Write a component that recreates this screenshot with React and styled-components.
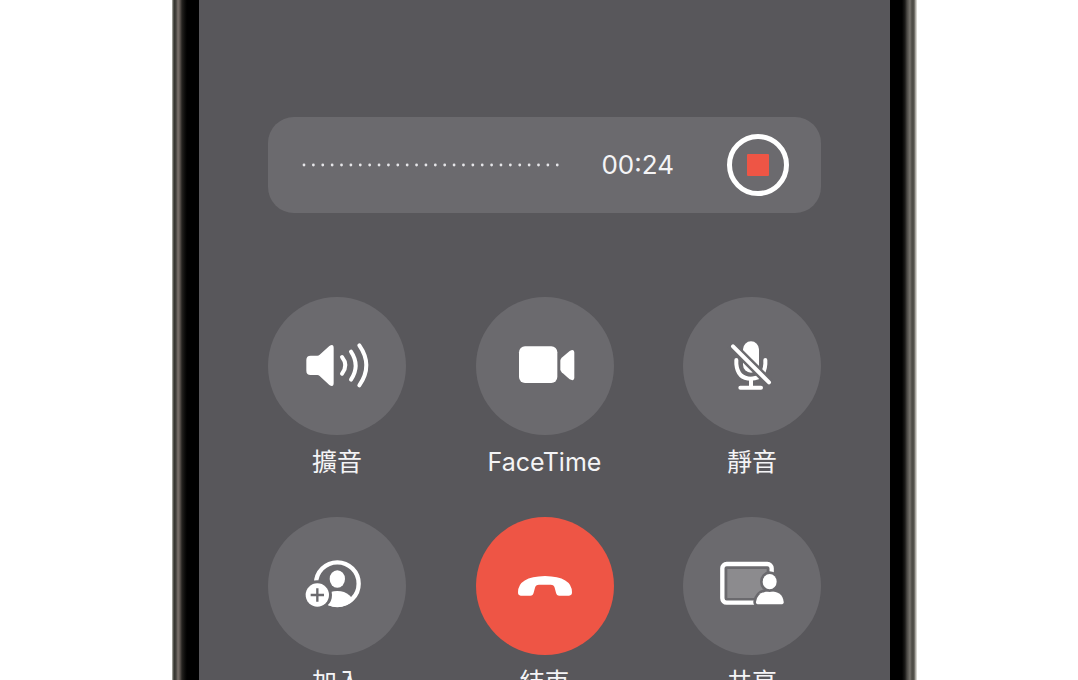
import React from "react";
import styled, { createGlobalStyle } from "styled-components";

const SCREEN = "#58575b";
const SURFACE = "#6b6a6e";
const RED = "#ee5545";

const GlobalStyle = createGlobalStyle`
  * {
    box-sizing: border-box;
  }
  body {
    margin: 0;
    background-color: #fff;
    font-family: Inter, "Noto Sans CJK TC", sans-serif;
  }
`;

const PageWrapper = styled.main`
  display: flex;
  justify-content: center;
  height: 100vh;
  padding-left: 11px;
  overflow: hidden;
`;

const Phone = styled.div`
  display: flex;
  width: 100%;
  max-width: 745px;
`;

const LeftRail = styled.div`
  flex: 0 0 27px;
  background: linear-gradient(
    to right,
    #b9b9b2 0,
    #33332d 2px,
    #45433e 4px,
    #7d746e 6px,
    #5c5550 8px,
    #24221f 10px,
    #0b0b0a 13px,
    #000 15px
  );
`;

const RightRail = styled.div`
  flex: 0 0 27px;
  background: linear-gradient(
    to right,
    #000 0,
    #000 12px,
    #1c1b19 15px,
    #4a4844 17px,
    #77746e 20px,
    #4d4b46 22px,
    #55534d 24px,
    #c4c2bc 26px,
    #e4e3df 27px
  );
`;

const Screen = styled.section`
  flex: 1;
  min-width: 0;
  padding: 117px 69px 0;
  background-color: ${SCREEN};
`;

const RecordingBar = styled.div`
  display: flex;
  align-items: center;
  height: 96px;
  margin-bottom: 84px;
  padding: 0 32px 0 34px;
  border-radius: 26px;
  background-color: ${SURFACE};
`;

const Waveform = styled.svg`
  flex: 1;
  min-width: 0;
  height: 4px;
  margin-right: 42px;
`;

const Timer = styled.time`
  margin-right: 53px;
  color: #f4f4f6;
  font-size: 26px;
  line-height: 32px;
`;

const StopButton = styled.button`
  display: grid;
  place-items: center;
  width: 62px;
  height: 62px;
  padding: 0;
  border: 5px solid #fff;
  border-radius: 50%;
  background: transparent;
`;

const StopMark = styled.span`
  width: 22px;
  height: 22px;
  border-radius: 1px;
  background-color: ${RED};
`;

const ControlGrid = styled.div`
  display: grid;
  grid-template-columns: repeat(3, 138px);
  justify-content: space-between;
  row-gap: 40px;
`;

const ControlWrapper = styled.div`
  display: flex;
  flex-direction: column;
  align-items: center;
  gap: 12px;
`;

const RoundButton = styled.button`
  display: grid;
  place-items: center;
  width: 138px;
  height: 138px;
  padding: 0;
  border: none;
  border-radius: 50%;
  background-color: ${(props) => props.$color};
`;

const ControlLabel = styled.label`
  color: #f4f4f6;
  font-size: 25px;
  line-height: 30px;
  white-space: nowrap;
`;

const Icon = styled.svg`
  width: 100px;
  height: 90px;
  fill: #fff;
`;

const SpeakerIcon = () => (
  <Icon viewBox="-9 3 300 270">
    <path d="M62 107h20q4 0 7-3l29-26q13-8 13 6v105q0 14-13 6l-29-27q-3-3-7-3H62q-13 0-13-13v-32q0-13 13-13z" />
    <g fill="none" stroke="#fff" strokeWidth="12" strokeLinecap="round">
      <path d="M156 111q20 25 0 50" />
      <path d="M183 95q28 42 0 84" />
      <path d="M208 76q42 60 0 120" />
    </g>
  </Icon>
);

const CameraIcon = () => (
  <Icon viewBox="-15 3 300 270">
    <rect x="57" y="79" width="115" height="110" rx="18" />
    <path d="M181 122q0-5 4-9l24-20q14-8 14 5v74q0 13-14 6l-24-21q-4-4-4-9z" />
  </Icon>
);

const MutedIcon = () => (
  <Icon viewBox="9 3 300 270">
    <rect x="132" y="64" width="48" height="94" rx="24" />
    <g fill="none" stroke="#fff" strokeWidth="12" strokeLinecap="round">
      <path d="M112 120v12q4 44 44 44t43-44v-12" />
      <path d="M156 176v26M124 203h62" />
    </g>
    <path d="M96 73L210 187" stroke={SURFACE} strokeWidth="27" />
    <path
      d="M102 79L210 187"
      stroke="#fff"
      strokeWidth="12"
      strokeLinecap="round"
    />
  </Icon>
);

const AddPersonIcon = () => (
  <Icon viewBox="-9 3 300 270">
    <clipPath id="avatar">
      <circle cx="142" cy="131" r="70" />
    </clipPath>
    <circle
      cx="142"
      cy="131"
      r="64"
      fill="none"
      stroke="#fff"
      strokeWidth="13"
    />
    <ellipse cx="142" cy="117" rx="23" ry="26" />
    <ellipse cx="142" cy="198" rx="52" ry="45" clipPath="url(#avatar)" />
    <circle cx="82" cy="165" r="44" fill={SURFACE} />
    <circle cx="82" cy="165" r="35" />
    <path d="M62 165h40M82 145v40" stroke={SURFACE} strokeWidth="7" />
  </Icon>
);

const HangUpIcon = () => (
  <Icon viewBox="-15 3 300 270">
    <path d="M54 157q0-47 81-49 81 2 81 49 0 10-9 10h-29q-8 0-10-9l-4-15q-2-9-12-9h-35q-10 0-12 9l-4 15q-2 9-10 9H62q-8 0-8-10z" />
  </Icon>
);

const ShareIcon = () => (
  <Icon viewBox="9 3 300 270">
    <rect x="85" y="87" width="118" height="87" fill="#8c8b8e" />
    <rect
      x="70"
      y="72"
      width="148"
      height="116"
      rx="13"
      fill="none"
      stroke="#fff"
      strokeWidth="13"
    />
    <g stroke={SURFACE} strokeWidth="16" paintOrder="stroke">
      <path d="M179 193q-9 0-8-8 5-31 42-31t41 31q1 8-8 8z" />
      <ellipse cx="212" cy="125" rx="21" ry="23" />
    </g>
  </Icon>
);

const CONTROLS = [
  { id: "speaker", label: "擴音", icon: SpeakerIcon },
  { id: "facetime", label: "FaceTime", icon: CameraIcon },
  { id: "mute", label: "靜音", icon: MutedIcon },
  { id: "add", label: "加入", icon: AddPersonIcon },
  { id: "end", label: "結束", icon: HangUpIcon, color: RED },
  { id: "share", label: "共享", icon: ShareIcon },
];

const DOTS = Array.from({ length: 28 }, (_, i) => i);

const Control = ({ id, label, icon: Glyph, color = SURFACE }) => {
  return (
    <ControlWrapper>
      <RoundButton id={id} type="button" $color={color}>
        <Glyph />
      </RoundButton>
      <ControlLabel htmlFor={id}>{label}</ControlLabel>
    </ControlWrapper>
  );
};

const App = () => {
  return (
    <>
      <GlobalStyle />
      <PageWrapper lang="zh-Hant">
        <Phone>
          <LeftRail />
          <Screen>
            <RecordingBar>
              <Waveform viewBox="0 0 258 4" fill="#e6e6e9">
                {DOTS.map((i) => (
                  <circle key={i} cx={2 + i * 9.4} cy="2" r="1.4" />
                ))}
              </Waveform>
              <Timer>00:24</Timer>
              <StopButton type="button" aria-label="停止錄音">
                <StopMark />
              </StopButton>
            </RecordingBar>
            <ControlGrid>
              {CONTROLS.map((control) => (
                <Control key={control.id} {...control} />
              ))}
            </ControlGrid>
          </Screen>
          <RightRail />
        </Phone>
      </PageWrapper>
    </>
  );
};

export default App;
